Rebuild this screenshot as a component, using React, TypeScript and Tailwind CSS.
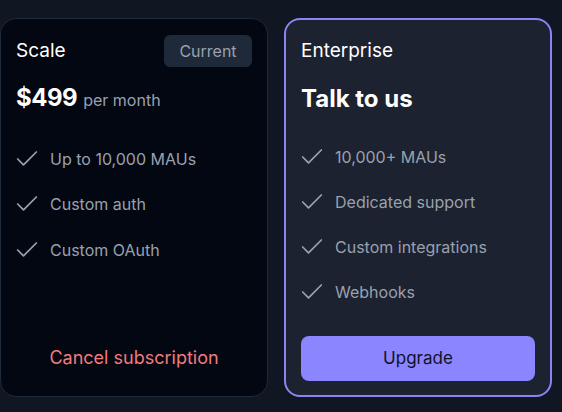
import { Check } from "lucide-react";

const SCALE_FEATURES = ["Up to 10,000 MAUs", "Custom auth", "Custom OAuth"];
const ENTERPRISE_FEATURES = [
  "10,000+ MAUs",
  "Dedicated support",
  "Custom integrations",
  "Webhooks",
];

function FeatureList({ items, list, row }: { items: string[]; list: string; row: string }) {
  return (
    <ul className={`flex flex-col ${list}`}>
      {items.map((item) => (
        <li key={item} className={`flex items-center gap-[9px] ${row}`}>
          <Check className="-ml-[3px] h-7 w-7 shrink-0 text-gray-400" strokeWidth={1.5} />
          <span className="text-base text-gray-400">{item}</span>
        </li>
      ))}
    </ul>
  );
}

export default function App() {
  return (
    <div
      className="min-h-[412px] w-[562px] bg-[#111722] pt-[18px]"
      style={{ fontFamily: "Inter, 'Noto Sans', sans-serif" }}
    >
      <div className="flex h-[379px] gap-4">
        <div className="flex w-[268px] flex-col rounded-2xl border border-gray-800 bg-[#030712] px-[15px] py-4">
          <div className="flex h-8 items-center justify-between">
            <h3 className="text-[19px] text-white">Scale</h3>
            <span className="flex h-8 w-[88px] items-center justify-center rounded-md bg-gray-800 text-base text-gray-400">
              Current
            </span>
          </div>
          <div className="mt-[15px] flex items-baseline gap-1.5">
            <span className="text-2xl leading-8 font-bold tracking-[-0.02em] text-white">$499</span>
            <span className="text-base text-gray-400">per month</span>
          </div>
          <FeatureList items={SCALE_FEATURES} list="mt-[22px]" row="h-[45.5px]" />
          <button className="mt-auto h-11 w-full text-lg text-[#f47a7a]">
            Cancel subscription
          </button>
        </div>

        <div className="flex w-[268px] flex-col rounded-2xl border-2 border-[#8a84f5] bg-[#1c2230] px-[15px] pt-[15px] pb-[14px]">
          <div className="flex h-8 items-center">
            <h3 className="text-[19px] text-white">Enterprise</h3>
          </div>
          <div className="mt-4 flex items-baseline">
            <span className="text-2xl leading-8 font-bold text-white">Talk to us</span>
          </div>
          <FeatureList items={ENTERPRISE_FEATURES} list="mt-[19px]" row="h-[45px]" />
          <button className="mt-auto h-[45px] w-full rounded-lg bg-[#8b85ff] text-[17px] text-[#0f1128]">
            Upgrade
          </button>
        </div>
      </div>
    </div>
  );
}
